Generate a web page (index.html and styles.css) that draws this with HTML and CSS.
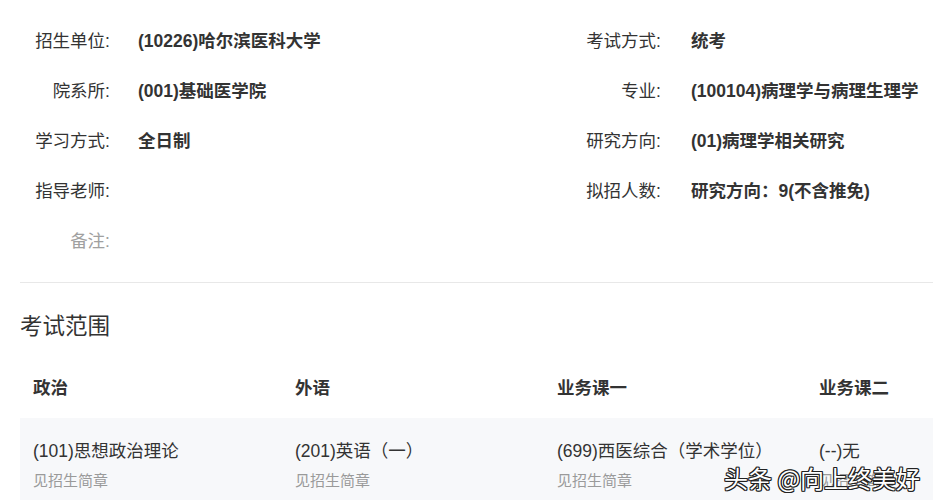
FILE: index.html
```html
<!DOCTYPE html>
<html lang="zh-CN">
<head>
<meta charset="utf-8">
<title>考试范围</title>
<link rel="stylesheet" href="styles.css">
</head>
<body>
<div class="page">
  <div class="info">
    <div class="label">招生单位:</div>
    <div class="value">(10226)哈尔滨医科大学</div>
    <div class="label">考试方式:</div>
    <div class="value">统考</div>

    <div class="label">院系所:</div>
    <div class="value">(001)基础医学院</div>
    <div class="label">专业:</div>
    <div class="value">(100104)病理学与病理生理学</div>

    <div class="label">学习方式:</div>
    <div class="value">全日制</div>
    <div class="label">研究方向:</div>
    <div class="value">(01)病理学相关研究</div>

    <div class="label">指导老师:</div>
    <div class="value"></div>
    <div class="label">拟招人数:</div>
    <div class="value">研究方向：9(不含推免)</div>

    <div class="label muted">备注:</div>
    <div class="value"></div>
  </div>
  <div class="divider"></div>
  <h2 class="section-title">考试范围</h2>
  <div class="scope">
    <div class="scope-head">政治</div>
    <div class="scope-head">外语</div>
    <div class="scope-head">业务课一</div>
    <div class="scope-head">业务课二</div>
    <div class="scope-cell"><div class="main">(101)思想政治理论</div><div class="sub">见招生简章</div></div>
    <div class="scope-cell"><div class="main">(201)英语（一）</div><div class="sub">见招生简章</div></div>
    <div class="scope-cell"><div class="main">(699)西医综合（学术学位）</div><div class="sub">见招生简章</div></div>
    <div class="scope-cell"><div class="main">(--)无</div><div class="sub">见招生简章</div></div>
  </div>
</div>
<div class="watermark">头条 @向上终美好</div>
</body>
</html>
```

FILE: styles.css
```css
html, body {
  margin: 0;
  padding: 0;
  background: #ffffff;
  overflow: hidden;
}
body {
  font-family: "Liberation Sans", "Noto Sans CJK SC", sans-serif;
  color: #333333;
  font-size: 17.5px;
  position: relative;
  height: 500px;
}
.page {
  padding: 16px 0 0 20px;
}
.info {
  display: grid;
  grid-template-columns: 90px 431px 120px 1fr;
  grid-auto-rows: 50px;
  align-items: center;
}
.label {
  text-align: right;
  color: #333333;
  line-height: 24px;
  white-space: nowrap;
}
.label.muted {
  color: #a0a0a0;
}
.value {
  font-weight: bold;
  color: #333333;
  padding-left: 28px;
  line-height: 24px;
  white-space: nowrap;
}
.info .value:nth-child(4n) {
  padding-left: 30px;
}
.divider {
  height: 1px;
  background: #e8e8e8;
  margin-top: 16px;
}
.section-title {
  margin: 29px 0 0 0;
  font-size: 22.5px;
  font-weight: normal;
  line-height: 30px;
  color: #333333;
}
.scope {
  margin-top: 16px;
  display: grid;
  grid-template-columns: 262px 262px 262px 1fr;
}
.scope-head {
  height: 60px;
  line-height: 60px;
  padding-left: 13px;
  font-weight: bold;
  color: #333333;
  white-space: nowrap;
}
.scope-cell {
  background: #f7f8fa;
  padding: 21px 0 30px 13px;
  white-space: nowrap;
}
.main {
  line-height: 24px;
  color: #333333;
}
.sub {
  margin-top: 7px;
  font-size: 15px;
  line-height: 22px;
  color: #9a9a9a;
}
.watermark {
  position: absolute;
  left: 724px;
  top: 463px;
  font-family: "Noto Sans CJK SC", sans-serif;
  font-size: 24px;
  line-height: 30px;
  color: #ffffff;
  white-space: nowrap;
  text-shadow: 1px 1px 0 #222, -1px -1px 0 #222, 1px -1px 0 #222, -1px 1px 0 #222, 0 1px 0 #222, 1px 0 0 #222, 0 -1px 0 #222, -1px 0 0 #222;
}
```
